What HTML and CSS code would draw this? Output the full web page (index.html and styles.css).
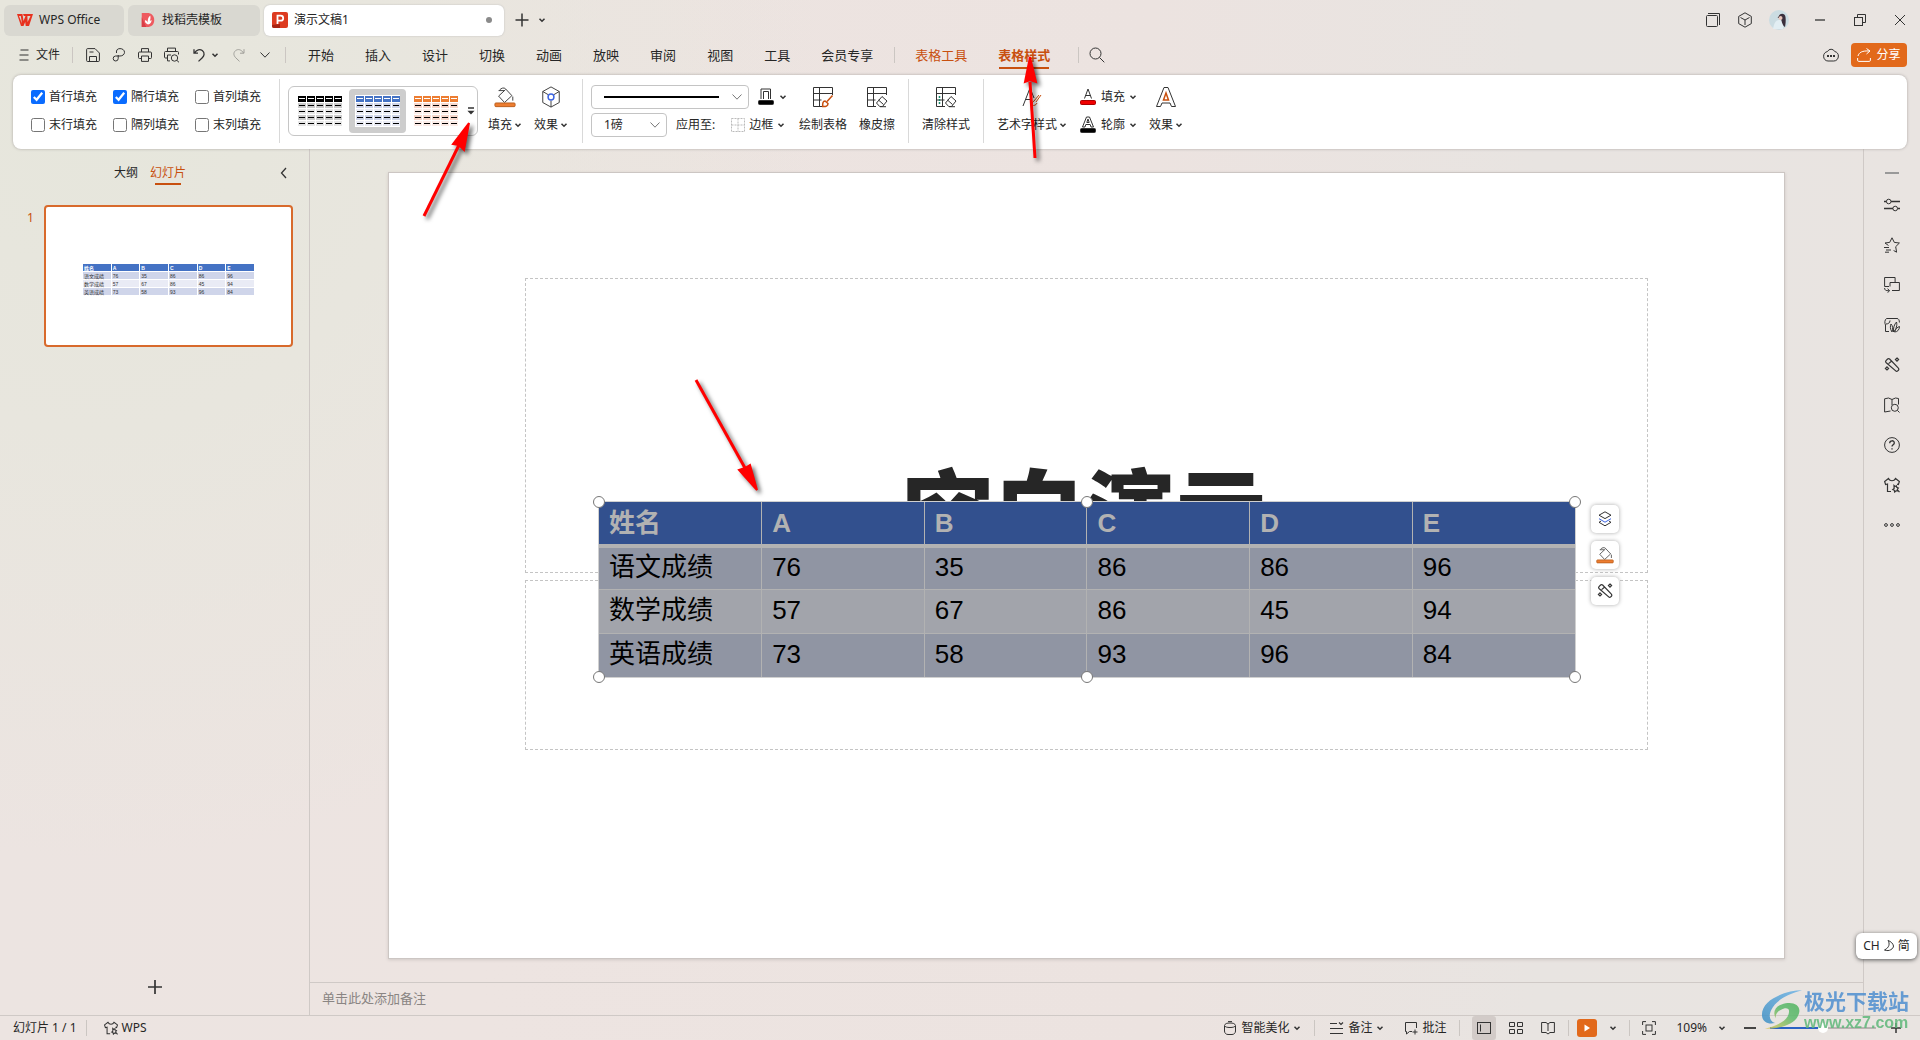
FILE: index.html
```html
<!DOCTYPE html>
<html lang="zh-CN">
<head>
<meta charset="utf-8">
<title>演示文稿1 - WPS Office</title>
<link rel="stylesheet" href="styles.css">
</head>
<body>
<svg class="defs" aria-hidden="true">
  <symbol id="chev" viewBox="0 0 8 8"><path d="M1.5 2.7 4 5.2 6.500 2.700" stroke-width="1.5"/></symbol>
  <symbol id="chev-thin" viewBox="0 0 12 12"><path d="M1.500 3.500 6 8.200 10.500 3.500"/></symbol>
  <symbol id="bucket" viewBox="0 0 24 24"><path d="M6 4.500c2-2.500 5-3 6.500-1.500l7 7.500-8 7.500-6.500-7 7.500-7M5 5h6M20.500 11.500v4.500" /><rect x="1" y="18.500" width="22" height="4" rx="1" fill="#ed7d31" stroke="#b75c1a"/></symbol>
  <symbol id="wand" viewBox="0 0 16 16"><path d="M2 3.600 3.600 2a1.400 1.400 0 0 1 2 0l8.800 9.200a1.400 1.400 0 0 1 0 2l-.7.700a1.400 1.400 0 0 1-2 0L2 5.500a1.400 1.400 0 0 1 0-1.900zM4.600 6.600l2.800-2.400M13 1l1.600 1.600L13 4.200l-1.600-1.600zM3 9.800l1.600 1.600L3 13l-1.600-1.600z" stroke-width="1.200"/></symbol>
  <symbol id="shirt" viewBox="0 0 16 16"><path d="M7 14.500H3.500V7L1.600 7.600.600 4.500 4.500 1.500c1.500 3 5.500 3 7 0l3.900 3-1 3-1.400-.4M10 8.500l1 1 1.500-.7.200 1.600 1.600.600-1 1.300.4 1.600-1.700-.1-1.300 1.200-.4-1.700-1.500-.7 1.300-1zM13.500 13l2 2.200" stroke-width="1.200"/></symbol>
  <symbol id="tablebase" viewBox="0 0 22 22"><path d="M10 20.500H1.500V1.500h19V9M1.500 7.500h19M7.500 1.500v19M1.500 14h8"/></symbol>
</svg>

<header class="titlebar">
  <button class="tab tab-home"><svg class="logo" viewBox="0 0 16 14"><path d="M0 1h5.500l1 7L8.500 3H6.800L6 1h10l-4 12H8.700l-.5-4-1.700 4H4zM2 3l3 7.500L3.800 3zM10.400 3l.2 6L13.500 3z" fill="#e8321f" fill-rule="evenodd"/></svg>WPS Office</button>
  <button class="tab tab-shell"><svg class="logo" viewBox="0 0 16 18"><path d="M1 1h6c5 0 8 3 8 8s-3 8-8 8H1z" fill="#ee5a5f"/><path d="M1 17V6l5 11z" fill="#d93d46"/><path d="M8 14c-3-1-4-3-3-5 2 1 2.500 2 2.800 3C7.500 9 8 6 10.500 4c.5 2 .5 4-.5 6l2-1c0 3-1.500 4.500-4 5z" fill="#fff"/></svg>找稻壳模板</button>
  <button class="tab tab-doc"><svg class="logo" viewBox="0 0 16 16"><rect width="16" height="16" rx="2" fill="#dd3b20"/><path d="M0 13l8-1v4H2a2 2 0 0 1-2-2z" fill="#a82412"/><path d="M5.500 12V3.700h3.200a2.500 2.500 0 0 1 0 5H5.500" fill="none" stroke="#fff" stroke-width="1.800"/></svg><span>演示文稿1</span><i class="dot"></i></button>
  <button class="ico newtab" aria-label="新建"><svg class="i14" viewBox="0 0 14 14"><path d="M7 .5v13M.5 7h13" stroke-width="1.500"/></svg></button>
  <button class="ico" aria-label="标签列表"><svg class="i8"><use href="#chev"/></svg></button>
  <div class="win">
    <button class="ico" aria-label="窗口"><svg class="i16" viewBox="0 0 16 16"><rect x="1.500" y="3.500" width="11" height="11" rx="1"/><path d="M3 1.500h11.500V13"/></svg></button>
    <button class="ico" aria-label="应用"><svg class="i16" viewBox="0 0 16 16"><path d="M8 .8l6.300 3.600v7.200L8 15.200l-6.300-3.600V4.400zM3.500 5.500 8 8l4.500-2.500M8 8v5"/></svg></button>
    <button class="ico" aria-label="账户"><svg class="i20" viewBox="0 0 20 20"><circle cx="10" cy="10" r="10" fill="#cbdce2" stroke="none"/><path d="M4 19c1-6 3-9 6-9s5 4 4 9z" fill="#e2eef3" stroke="none"/><path d="M10 6c1-3 6-3 6.500 1 .5 4 0 7-.5 10-2-1-3-4-3.500-6.500z" fill="#3a2f3c" stroke="none"/><circle cx="11.500" cy="8" r="2" fill="#e9c6bb" stroke="none"/><path d="M9 8l2-3" stroke="#5a4a50"/></svg></button>
    <button class="ico wide" aria-label="最小化"><svg class="i12" viewBox="0 0 12 12"><path d="M1 6h10" stroke-width="1.300"/></svg></button>
    <button class="ico wide" aria-label="还原"><svg class="i12" viewBox="0 0 12 12"><rect x=".5" y="3.500" width="8" height="8"/><path d="M3.500 3.500v-3h8v8h-3"/></svg></button>
    <button class="ico wide" aria-label="关闭"><svg class="i12" viewBox="0 0 12 12"><path d="M1 1l10 10M11 1 1 11"/></svg></button>
  </div>
</header>

<nav class="menubar">
  <button class="file"><svg class="i10" viewBox="0 0 10 12"><path d="M1.500 1h8M.500 6h9M.500 11h9" stroke-width="1.200"/></svg>文件</button>
  <i class="vr"></i>
  <div class="quick">
    <button class="ico" aria-label="保存"><svg class="i14" viewBox="0 0 14 14"><path d="M.600 1.500A1 1 0 0 1 1.600.600H9l4.400 4.400v7.500a1 1 0 0 1-1 1H1.600a1 1 0 0 1-1-1zM3.500 13.400V8.500h7v4.900M3.500 4h4"/></svg></button>
    <button class="ico" aria-label="输出"><svg class="i14" viewBox="0 0 14 14"><path d="M4.500 5C4 2 5.500.600 8 .600s4.500 1.500 4.500 3.700S10.500 8 8 8H3.500a2.500 2.500 0 1 0 2.700 2.500V7" /></svg></button>
    <button class="ico" aria-label="打印"><svg class="i14" viewBox="0 0 14 14"><path d="M3.500 4V.600h7V4M3.500 10.500h-2a1 1 0 0 1-1-1V5a1 1 0 0 1 1-1h11a1 1 0 0 1 1 1v4.500a1 1 0 0 1-1 1h-2M3.500 8h7v5.400h-7z"/></svg></button>
    <button class="ico" aria-label="打印预览"><svg class="i16" viewBox="0 0 16 15"><path d="M3.500 4V.600h8V4M3.500 10.500h-2a1 1 0 0 1-1-1V5a1 1 0 0 1 1-1h12a1 1 0 0 1 1 1v2M6 13.400H3.500V7.500H7M13 13l2 1.800"/><circle cx="10.500" cy="10.500" r="3.200"/></svg></button>
    <button class="ico" aria-label="撤销"><svg class="i14" viewBox="0 0 14 14"><path d="M2 1.200v4h4M2.500 5C4.500 1.500 8 .800 10.300 2.500c3 2.500 1.700 5.500 0 7.200L6.500 13.400" stroke-width="1.300"/></svg><svg class="i8"><use href="#chev"/></svg></button>
    <button class="ico off" aria-label="恢复" disabled><svg class="i14" viewBox="0 0 14 14"><path d="M12 1.200v4H8M11.500 5C9.500 1.500 6 .800 3.700 2.500c-3 2.500-1.700 5.500 0 7.200l3.800 3.700"/></svg></button>
    <button class="ico" aria-label="更多"><svg class="i12"><use href="#chev-thin"/></svg></button>
  </div>
  <i class="vr"></i>
  <div class="menus">
    <a href="#">开始</a><a href="#">插入</a><a href="#">设计</a><a href="#">切换</a><a href="#">动画</a><a href="#">放映</a><a href="#">审阅</a><a href="#">视图</a><a href="#">工具</a><a href="#">会员专享</a>
  </div>
  <i class="vr"></i>
  <div class="menus ctx"><a href="#">表格工具</a><a href="#" class="on">表格样式</a></div>
  <i class="vr"></i>
  <button class="ico search" aria-label="搜索"><svg class="i16" viewBox="0 0 16 16"><circle cx="6.500" cy="6.500" r="5.500"/><path d="M10.500 10.500 15.300 15.300"/></svg></button>
  <div class="share-area">
    <button class="ico" aria-label="云同步"><svg class="i16" viewBox="0 0 16 14"><path d="M4.500 3.500a4 4 0 0 1 7.200 0C14 4 15.400 5.800 15.400 8c0 3-2 5-4.600 5H5C2.500 13 .600 11 .600 8.200c0-2.400 1.500-4.200 3.900-4.700z"/><path d="M4 8h2M7 8h2M10 8h2" stroke-width="2"/></svg></button>
    <button class="share"><svg class="i14" viewBox="0 0 14 14"><path d="M1 8c1-3.500 4-5.500 11.500-5M9.500.500 13 3 9.500 6M.600 10v2.200a1.200 1.200 0 0 0 1.200 1.200h10.400a1.200 1.200 0 0 0 1.200-1.200V10"/></svg>分享</button>
  </div>
</nav>

<section class="ribbon">
  <div class="group checks">
    <label><input type="checkbox" checked>首行填充</label><label><input type="checkbox" checked>隔行填充</label><label><input type="checkbox">首列填充</label>
    <label><input type="checkbox">末行填充</label><label><input type="checkbox">隔列填充</label><label><input type="checkbox">末列填充</label>
  </div>
  <div class="group styles">
    <div class="gallery">
      <button class="swatch black" aria-label="黑色样式"><i></i><i></i><i></i><i></i><i></i></button>
      <button class="swatch blue on" aria-label="蓝色样式"><i></i><i></i><i></i><i></i><i></i></button>
      <button class="swatch orange" aria-label="橙色样式"><i></i><i></i><i></i><i></i><i></i></button>
      <button class="ico gmore" aria-label="更多样式"><svg class="i8" viewBox="0 0 8 8"><path d="M1 1h6M2 4.500l2 2 2-2z" stroke-width="1.300"/></svg></button>
    </div>
    <button class="big"><svg class="i24"><use href="#bucket"/></svg><span>填充<svg class="i8"><use href="#chev"/></svg></span></button>
    <button class="big"><svg class="i24" viewBox="0 0 24 24"><path d="M12 1l9 5v12l-9 5-9-5V6zM3 6l6 3.500M21 6l-6 3.500M12 23v-7"/><circle cx="12" cy="12" r="3.200" stroke="#3a62e0" stroke-width="1.600"/></svg><span>效果<svg class="i8"><use href="#chev"/></svg></span></button>
  </div>
  <div class="group borders">
    <div class="stack">
      <div class="line">
        <span class="combo long"><select aria-label="线型"><option></option></select><b class="stroke"></b><svg class="i12"><use href="#chev-thin"/></svg></span>
        <button class="small pen" aria-label="线条颜色"><svg class="i18" viewBox="0 0 18 18"><path d="M4 11V1h9.500v10M6.500 11V3.500h5V11"/><rect x="1.500" y="12.500" width="15" height="4" rx="1" fill="#000"/></svg><svg class="i8"><use href="#chev"/></svg></button>
      </div>
      <div class="line">
        <span class="combo short"><select aria-label="线宽"><option>1磅</option></select><svg class="i12"><use href="#chev-thin"/></svg></span>
        <span class="apply">应用至:</span>
        <button class="small"><svg class="i14 faint" viewBox="0 0 14 14"><path d="M.500.500h13v13H.500zM7 .500v13M.500 7h13" stroke-dasharray="2 1"/></svg>边框<svg class="i8"><use href="#chev"/></svg></button>
      </div>
    </div>
    <button class="big"><svg class="i22" viewBox="0 0 22 22"><use href="#tablebase"/><path d="M20.500 9.500l-5.500 6M13 15c-2 0-2.500 2-2.300 5.500 3 .3 5.300-.5 5.300-3z" stroke="#c8500f" stroke-width="1.500"/></svg><span>绘制表格</span></button>
    <button class="big"><svg class="i22" viewBox="0 0 22 22"><use href="#tablebase"/><path d="M16 10.500l5 4.500-4.500 5.500h-2.800L10.500 17zM12.500 14l5 4.500M14 20.700h6"/></svg><span>橡皮擦</span></button>
  </div>
  <div class="group clear">
    <button class="big"><svg class="i22" viewBox="0 0 22 22"><use href="#tablebase"/><path d="M16 10.500l5 4.500-4.500 5.500h-2.800L10.500 17zM12.500 14l5 4.500M14 20.700h6"/><path d="M4.500 10v9" stroke="#18896b" stroke-dasharray="2 1" stroke-width="1.500"/></svg><span>清除样式</span></button>
  </div>
  <div class="group art">
    <button class="big"><svg class="i22" viewBox="0 0 22 22"><path d="M2 20 9 2l4 10M5 13.500h6"/><path d="M20 9l-5 7M18 9l-5 6c-2 1-2 3-2 4.500 2 0 4 0 5-2.500" stroke="#c8500f"/></svg><span>艺术字样式<svg class="i8"><use href="#chev"/></svg></span></button>
    <div class="stack tight">
      <button class="small"><svg class="i18" viewBox="0 0 18 18"><path d="M5.500 10.500 9 1l3.500 9.500M6.500 7.500h5"/><rect x="1.500" y="12.500" width="15" height="4" rx="1" fill="#f00000" stroke="#a00"/></svg>填充<svg class="i8"><use href="#chev"/></svg></button>
      <button class="small"><svg class="i18" viewBox="0 0 18 18"><path d="M3.500 11 7.500 1h3l4 10h-2.500l-.8-2.500H6.800L6 11zM7.800 6.500 9 3l1.200 3.500z"/><rect x="1.500" y="12.500" width="15" height="4" rx="1" fill="#000"/></svg>轮廓<svg class="i8"><use href="#chev"/></svg></button>
    </div>
    <button class="big"><svg class="i22" viewBox="0 0 22 22"><path d="M1.500 20.500 9 1.500h4l7.500 19h-4L15 17H7l-1.500 3.500z"/><path d="M8.500 14 11 7l2.500 7z" stroke="#c8500f" stroke-width="1.500"/></svg><span>效果<svg class="i8"><use href="#chev"/></svg></span></button>
  </div>
</section>

<main class="work">
  <aside class="panel">
    <div class="ptabs"><a href="#">大纲</a><a href="#" class="on">幻灯片</a><button class="ico fold" aria-label="收起"><svg class="i12" viewBox="0 0 12 12"><path d="M8 1 3.500 6 8 11" stroke-width="1.300"/></svg></button></div>
    <div class="thumbrow"><span>1</span>
      <div class="thumb">
        <table class="mini">
          <tr><th>姓名</th><th>A</th><th>B</th><th>C</th><th>D</th><th>E</th></tr>
          <tr><td>语文成绩</td><td>76</td><td>35</td><td>86</td><td>86</td><td>96</td></tr>
          <tr><td>数学成绩</td><td>57</td><td>67</td><td>86</td><td>45</td><td>94</td></tr>
          <tr><td>英语成绩</td><td>73</td><td>58</td><td>93</td><td>96</td><td>84</td></tr>
        </table>
      </div>
    </div>
    <button class="ico add" aria-label="新建幻灯片"><svg class="i14" viewBox="0 0 14 14"><path d="M7 0v14M0 7h14" stroke-width="1.700"/></svg></button>
  </aside>
  <section class="center">
    <div class="stage">
      <div class="slide">
        <div class="ph ph-title"></div>
        <div class="ph ph-sub"></div>
        <h1>空白演示</h1>
        <div class="frame">
          <table class="grid">
            <tr><th>姓名</th><th>A</th><th>B</th><th>C</th><th>D</th><th>E</th></tr>
            <tr><td>语文成绩</td><td>76</td><td>35</td><td>86</td><td>86</td><td>96</td></tr>
            <tr><td>数学成绩</td><td>57</td><td>67</td><td>86</td><td>45</td><td>94</td></tr>
            <tr><td>英语成绩</td><td>73</td><td>58</td><td>93</td><td>96</td><td>84</td></tr>
          </table>
          <i class="h tl"></i><i class="h tc"></i><i class="h tr"></i><i class="h bl"></i><i class="h bc"></i><i class="h br"></i>
          <div class="floats">
            <button aria-label="图层"><svg class="i16" viewBox="0 0 16 16"><path d="M8 .800 14 4.200 8 7.600 2 4.200zM2 11.300l6 3.500 6-3.500-2-1.200M2 11.300l2-1.200"/><path d="M2 7.700 8 11.200l6-3.500" stroke="#3a62e0"/></svg></button>
            <button aria-label="填充"><svg class="i18"><use href="#bucket"/></svg></button>
            <button aria-label="美化"><svg class="i16"><use href="#wand"/></svg></button>
          </div>
        </div>
      </div>
    </div>
    <div class="notes">单击此处添加备注</div>
  </section>
  <aside class="rail">
    <i class="grip"></i>
    <button class="ico" aria-label="属性"><svg class="i16" viewBox="0 0 16 16"><path d="M0 4.500h2.500M7 4.500h9M0 11.500h9M13.500 11.500H16" stroke-width="1.300"/><circle cx="4.700" cy="4.500" r="2.300"/><circle cx="11.200" cy="11.500" r="2.300"/></svg></button>
    <button class="ico" aria-label="动画"><svg class="i16" viewBox="0 0 16 16"><path d="M4.500 8.500 1 6l4.700-.6L8 .800l2.300 4.600L15.400 6l-3.700 3.700.9 5.500-3-1.700M0 10.500h5M2 13h5M1 15.200h4"/></svg></button>
    <button class="ico" aria-label="切换"><svg class="i16" viewBox="0 0 16 16"><path d="M5 9.500H.600v-9h10.500V5.500M6 5.500h9.400v8H8M6 9.500v-4M.600 11c0 2 1 2.800 4.400 2.800M3.500 11.700l2.200 2-2.200 2"/></svg></button>
    <button class="ico" aria-label="对象"><svg class="i16" viewBox="0 0 16 16"><path d="M5 14.500H1.500V8C.500 6 .500 3 2.500 1.500h10.500c1.500 0 2.400 1.500 2.400 4M2 7c2 0 4-1 4-3.500M8 15c-2-3-2-6-1-8 2 2 2 5 1 8zM9.500 15c-.5-4 1-8 3-10 .8 3 0 7-3 10zM10.500 15c1-3 3-5 5-5.500 0 3-2 5.500-5 5.500z"/></svg></button>
    <button class="ico" aria-label="美化"><svg class="i16"><use href="#wand"/></svg></button>
    <button class="ico" aria-label="资料"><svg class="i16" viewBox="0 0 16 16"><path d="M6.500 14 .600 15V1.800L4.500 1 8 2.500 11.500 1l3 .5v6M8 2.500V8M13.500 13.500l2 2"/><circle cx="10.800" cy="10.800" r="3.500"/></svg></button>
    <button class="ico" aria-label="帮助"><svg class="i16" viewBox="0 0 16 16"><circle cx="8" cy="8" r="7.400"/><path d="M5.700 6.200C5.700 3 10.300 3 10.300 6c0 1.800-2.300 1.800-2.300 3.500M8 11.300v1.300" stroke-width="1.300"/></svg></button>
    <button class="ico" aria-label="皮肤"><svg class="i16"><use href="#shirt"/></svg></button>
    <button class="ico" aria-label="更多"><svg class="i16" viewBox="0 0 16 16"><circle cx="2" cy="8" r="1.400"/><circle cx="8" cy="8" r="1.400"/><circle cx="14" cy="8" r="1.400"/></svg></button>
  </aside>
</main>

<footer class="status">
  <span>幻灯片 1 / 1</span><i class="vr"></i>
  <button class="small skin"><svg class="i14"><use href="#shirt"/></svg>WPS</button>
  <div class="sright">
    <button class="small"><svg class="i14" viewBox="0 0 14 14"><path d="M1.500 4.500C2 6 4 6.500 7 6.500s5-.5 5.500-2C12 2.500 10 2 7 2S2 2.500 1.500 4.500zM1.500 5v5c0 2 1.500 3.500 3.500 3.500h4c2 0 3.500-1.500 3.500-3.500V5M5 .600h4"/></svg>智能美化<svg class="i8"><use href="#chev"/></svg></button>
    <i class="vr"></i>
    <button class="small lead"><svg class="i14" viewBox="0 0 14 14"><path d="M0 2.500h7M0 7.500h13M0 12.500h13M9 1.500l2 2 2-2" stroke-width="1.200"/></svg>备注<svg class="i8"><use href="#chev"/></svg></button>
    <button class="small lead"><svg class="i14" viewBox="0 0 14 14"><path d="M12.500 7V1.500H1.500v9h1v2.500l3-2.500H8M11 8.500v5M8.500 11h5"/></svg>批注</button>
    <i class="vr"></i>
    <button class="view on" aria-label="普通视图"><svg class="i14" viewBox="0 0 14 14"><rect x=".5" y="1.500" width="13" height="11"/><path d="M3.500 3.500v7"/></svg></button>
    <button class="view" aria-label="浏览视图"><svg class="i14" viewBox="0 0 14 14"><path d="M.500 1.500h5v4h-5zM8.500 1.500h5v4h-5zM.500 8.500h5v4h-5zM8.500 8.500h5v4h-5z"/></svg></button>
    <button class="view" aria-label="阅读视图"><svg class="i14" viewBox="0 0 14 14"><path d="M7 3 5 1.500H.600v10H5L7 13l2-1.500h4.400v-10H9zM7 3v7"/></svg></button>
    <i class="vr"></i>
    <button class="play" aria-label="放映"><svg class="i12" viewBox="0 0 12 12"><path d="M3.500 2.500v7L9 6z" fill="#fff" stroke="none"/></svg></button>
    <button class="ico playmore" aria-label="放映选项"><svg class="i8"><use href="#chev"/></svg></button>
    <i class="vr"></i>
    <button class="ico fit" aria-label="适应窗口"><svg class="i14" viewBox="0 0 14 14"><path d="M.600 4V.600H4M10 .600h3.400V4M13.400 10v3.400H10M4 13.400H.600V10"/><rect x="4" y="4" width="6" height="6"/></svg></button>
    <button class="small pct">109%<svg class="i8"><use href="#chev"/></svg></button>
    <button class="ico" aria-label="缩小"><svg class="i12" viewBox="0 0 12 12"><path d="M0 6h12" stroke-width="1.800"/></svg></button>
    <input class="zoom" type="range" min="0" max="100" value="50" aria-label="缩放">
    <button class="ico" aria-label="放大"><svg class="i12" viewBox="0 0 12 12"><path d="M1 6h10M6 1v10" stroke-width="1.500"/></svg></button>
  </div>
</footer>

<div class="ime">CH <svg class="i12" viewBox="0 0 12 12"><path d="M5 .500c2 3 1.500 7-3.500 9.500 5 2 9-1.500 9-4C10 3.500 8 1.500 5 .500z"/></svg> 简</div>

<div class="mark">
  <svg viewBox="0 0 46 42">
    <defs>
      <linearGradient id="mb" x1="0" y1="1" x2="1" y2="0"><stop offset="0" stop-color="#3d8fc4"/><stop offset="1" stop-color="#6fb4e6"/></linearGradient>
      <linearGradient id="mg" x1="0" y1="1" x2="1" y2="0"><stop offset="0" stop-color="#e3c95c"/><stop offset=".6" stop-color="#5cba6c"/><stop offset="1" stop-color="#4fb35e"/></linearGradient>
    </defs>
    <path d="M44 0C28 0 1 9 1 26c0 7 6 11 14 9-6-2-7-8-4-14C16 10 30 4 44 0z" fill="url(#mb)"/>
    <path d="M4 41c12-3 26-8 26-19 0-3-4-4-9-1-4 2-6 6-5 9-4-6-1-13 6-15 11-4 20 0 19 8C39 36 22 41 4 41z" fill="url(#mg)"/>
  </svg>
  <div><b>极光下载站</b><em>www.xz7.com</em></div>
</div>

<svg class="arrows" aria-hidden="true">
  <g><path d="M424 216 459 145"/><path class="head" d="M469 123 464 150 459 145 453 144z"/></g>
  <g><path d="M696 380 745 468"/><path class="head" d="M757 490 739 470 745 468 750 465z"/></g>
  <g><path d="M1035 158 1030 82"/><path class="head" d="M1030 57 1036 82 1030 80 1025 82z"/></g>
</svg>
</body>
</html>
```
FILE: styles.css
```css
* { box-sizing: border-box; }

body {
  margin: 0;
  height: 100vh;
  display: flex;
  flex-direction: column;
  overflow: hidden;
  font: 12px/16px "Noto Sans", "Noto Sans CJK SC", sans-serif;
  color: #262626;
  background:
    radial-gradient(circle at 5% 12%, #e6e6dc 0, #e8e6de 15%, rgba(233, 230, 223, 0) 36%),
    linear-gradient(90deg, #ece4e1 0, #ede4e1 25%, #ece3e0 60%, #e8e4e1 80%, #e9e4e1 100%);
}

.defs { position: absolute; width: 0; height: 0; }
svg { display: block; flex: none; fill: none; stroke: #333; stroke-width: 1; }
button { display: flex; align-items: center; justify-content: center; padding: 0; border: 0; background: none; font: inherit; color: inherit; white-space: nowrap; }
a { color: inherit; text-decoration: none; }
.i8 { width: 8px; height: 8px; }
.i10 { width: 10px; height: 12px; }
.i12 { width: 12px; height: 12px; }
.i14 { width: 14px; height: 14px; }
.i16 { width: 16px; height: 16px; }
.i18 { width: 18px; height: 18px; }
.i20 { width: 20px; height: 20px; }
.i22 { width: 22px; height: 22px; }
.i24 { width: 24px; height: 24px; }
.vr { width: 1px; height: 16px; background: #cbc6c2; flex: none; }

/* title bar */
.titlebar { display: flex; align-items: center; height: 40px; padding-left: 4px; }
.tab { height: 31px; border-radius: 6px; background: #d9d8d1; justify-content: flex-start; gap: 6px; margin-right: 4px; }
.tab .logo { width: 16px; height: 16px; stroke: none; }
.tab-home { width: 120px; padding-left: 13px; }
.tab-shell { width: 132px; padding-left: 12px; }
.tab-doc { width: 240px; padding: 0 12px 0 8px; background: #fff; box-shadow: 0 0 2px #bbb; }
.tab-doc span { flex: 1; text-align: left; }
.dot { width: 6px; height: 6px; border-radius: 50%; background: #8a8a8a; }
.newtab { margin: 0 9px 0 7px; }
.win { margin-left: auto; display: flex; align-items: center; gap: 16px; padding-right: 8px; }
.win .wide { width: 24px; }
.win .wide:nth-child(4) { margin-left: 3px; }

/* menu row */
.menubar { display: flex; align-items: center; height: 34px; padding: 0 13px 4px 19px; }
.file { gap: 7px; margin-right: 12px; }
.quick { display: flex; align-items: center; gap: 12px; margin: 0 14px 0 13px; }
.quick button { gap: 5px; }
.quick button:nth-child(6) { margin: 0 1px; }
.off { opacity: .4; }
.menus { display: flex; gap: 31px; margin: 0 21px 0 22px; font-size: 13px; line-height: 18px; }
.ctx { color: #c8500f; margin: 0 28px 0 20px; }
.ctx .on { font-weight: 700; box-shadow: 0 4px 0 -1px #ebe4e1, 0 6px 0 -1px #c8500f; }
.search { margin-left: 10px; }
.share-area { margin-left: auto; display: flex; gap: 12px; }
.share { width: 56px; height: 24px; border-radius: 4px; background: #e2691b; color: #fff; gap: 5px; }
.share svg { stroke: #fff; }

/* ribbon */
.ribbon { display: flex; margin: 1px 13px 0; height: 74px; padding: 4px 0 6px; border-radius: 8px; background: #fff; box-shadow: 0 0 3px #aaa5a2; flex: none; z-index: 1; }
.group { display: flex; align-items: center; height: 64px; border-right: 1px solid #d9d9d9; }
.group:last-child { border: 0; }
.checks { display: grid; grid-template-columns: repeat(3, 82px); row-gap: 12px; align-content: center; padding: 0 2px 0 18px; }
.checks label { display: flex; align-items: center; gap: 4px; white-space: nowrap; }
.checks input { width: 14px; height: 14px; margin: 0; accent-color: #0a6cff; }
.styles { padding: 0 12px 0 8px; }
.gallery { display: flex; align-items: center; gap: 1px; width: 190px; height: 50px; padding-left: 2px; border: 1px solid #c6c6c6; border-radius: 6px; margin-right: 10px; }
.swatch { flex: none; flex-direction: column; gap: 1px; width: 57px; height: 44px; border-radius: 4px; }
.swatch.on { background: linear-gradient(#fff, #fff) center / 45px 32px no-repeat, #cdcdcd; }
.swatch i { position: relative; width: 44px; height: 5px; background: var(--c); -webkit-mask: repeating-linear-gradient(90deg, #000 0 8px, transparent 8px 9px); }
.swatch i:nth-child(even) { background: var(--b); }
.swatch i:first-child { height: 6px; background: var(--a); }
.swatch i::after { content: ""; position: absolute; left: 0; right: 0; top: 2px; height: 1px; background: repeating-linear-gradient(90deg, transparent 0 1px, #000 1px 7px, transparent 7px 9px); }
.swatch i:first-child::after { background: repeating-linear-gradient(90deg, transparent 0 1px, #fff 1px 7px, transparent 7px 9px); }
.black { --a: #000; --b: #cbcbcb; --c: #e7e7e7; }
.blue { --a: #4472c4; --b: #cfd5ea; --c: #e9ebf5; }
.orange { --a: #ed7d31; --b: #f8d7cb; --c: #fcece7; }
.gmore { width: 11px; }
.big { flex-direction: column; gap: 9px; height: 56px; padding-bottom: 4px; }
.big > svg { height: 22px; }
.big span { display: flex; align-items: center; gap: 2px; }
.styles .big { width: 34px; margin-right: 12px; }
.styles .big:last-child { margin-right: 2px; }
.borders { padding: 0 13px 0 8px; gap: 12px; }
.stack { display: flex; flex-direction: column; gap: 4px; }
.line { display: flex; align-items: center; }
.combo { position: relative; display: flex; align-items: center; height: 24px; border: 1px solid #c4c4c4; border-radius: 4px; }
.combo select { appearance: none; width: 100%; height: 22px; padding: 0 0 0 12px; border: 0; background: none; font: inherit; color: inherit; }
.combo svg { position: absolute; right: 5px; stroke: #777; }
.combo .stroke { position: absolute; left: 12px; width: 115px; height: 2px; background: #000; }
.long { width: 158px; }
.short { width: 76px; }
.pen { margin-left: 8px; }
.apply { margin: 0 16px 0 9px; }
.small { gap: 4px; }
.faint { stroke: #bbb; }
.clear { padding: 0 13px; }
.art { padding-left: 13px; gap: 12px; }
.tight { gap: 10px; }

/* workspace */
.work { flex: 1; min-height: 0; display: flex; }
.panel { width: 310px; border-right: 1px solid #cfc9c6; display: flex; flex-direction: column; }
.ptabs { display: flex; gap: 12px; align-items: center; padding: 16px 19px 0 114px; }
.ptabs .on { position: relative; color: #c8500f; }
.ptabs .on::after { content: ""; position: absolute; left: 5px; right: 5px; bottom: -4px; height: 2px; background: #c8500f; }
.fold { margin-left: auto; }
.thumbrow { display: flex; gap: 11px; margin: 24px 16px 0 27px; color: #c8500f; }
.thumbrow span { width: 6px; padding-top: 5px; }
.thumb { flex: 1; height: 142px; border: 2px solid #d86a2c; border-radius: 4px; background: #fff; padding: 56px 36px 0; }
.mini { width: 100%; table-layout: fixed; border-collapse: collapse; font: 5px/6px "Liberation Sans", "Noto Sans CJK SC", sans-serif; color: #333; }
.mini th, .mini td { padding: 0 1px; height: 8px; border: 1px solid #fff; background: #cfd5ea; text-align: left; white-space: nowrap; }
.mini th { background: #4472c4; color: #fff; }
.mini tr:nth-child(3) td { background: #e9ebf5; }
.add { margin: auto auto 21px; }

.center { flex: 1; min-width: 0; display: flex; flex-direction: column; }
.stage { flex: 1; min-height: 0; padding: 23px 78px; display: flex; }
.slide { position: relative; flex: 1; background: #fff; border: 1px solid #ccc6c3; box-shadow: 0 1px 3px #cfc8c5; }
.ph { position: absolute; left: 136px; right: 136px; border: 1px dashed #c4c4c4; }
.ph-title { top: 105px; height: 295px; }
.ph-sub { top: 407px; height: 170px; }
.slide h1 { position: absolute; left: 0; right: 4px; top: 273px; margin: 0; text-align: center; font-size: 91px; line-height: 120px; font-weight: 900; font-family: "Noto Sans CJK SC", sans-serif; color: #262626; }
.frame { position: absolute; left: 209px; right: 208px; top: 328px; border: 1px solid #d0d0d0; }
.grid { width: 100%; table-layout: fixed; border-collapse: collapse; font: 26px/36px "Liberation Sans", "Noto Sans CJK SC", sans-serif; color: #000; }
.grid th, .grid td { height: 44px; padding: 0 10px 3px; text-align: left; border: 1px solid #b2b2b2; background: #9095a3; }
.grid th { padding-bottom: 1px; background: #32508e; color: #b2b2b2; border-bottom: 4px solid #b2b2b2; }
.grid tr:nth-child(2) td { height: 43px; }
.grid tr:nth-child(3) td { background: #a2a4ab; }
.grid tr > :first-child { border-left: 0; }
.grid tr > :last-child { border-right: 0; }
.grid tr:first-child th { border-top: 0; }
.grid tr:last-child td { border-bottom: 0; }
.h { position: absolute; width: 12px; height: 12px; margin: -6px; border: 1px solid #777; border-radius: 50%; background: #fff; }
.tl, .bl { left: 0; }
.tc, .bc { left: 50%; }
.tr, .br { left: 100%; }
.tl, .tc, .tr { top: 0; }
.bl, .bc, .br { top: 100%; }
.floats { position: absolute; left: 100%; top: 3px; margin-left: 16px; display: flex; flex-direction: column; gap: 8px; }
.floats button { width: 28px; height: 28px; border-radius: 5px; background: #fff; box-shadow: 0 0 4px #aaa; }
.notes { height: 33px; border-top: 1px solid #cfc9c6; padding: 7px 12px; color: #8a8583; font-size: 13px; }

.rail { width: 57px; border-left: 1px solid #cfc9c6; display: flex; flex-direction: column; align-items: center; padding-top: 23px; }
.rail .grip { width: 14px; height: 2px; background: #999; margin-bottom: 11px; }
.rail .ico { height: 40px; width: 40px; }

/* status bar */
.status { height: 25px; flex: none; border-top: 1px solid #cfc9c6; display: flex; align-items: center; gap: 9px; padding: 0 18px 0 13px; }
.skin { margin-left: 8px; }
.sright { margin-left: auto; display: flex; align-items: center; gap: 8px; height: 100%; }
.sright .small { margin-right: 5px; }
.sright .lead { margin-left: 7px; }
.view { width: 24px; height: 24px; border-radius: 3px; }
.view.on { margin-left: 4px; background: #d2cbc8; }
.play { width: 20px; height: 18px; border-radius: 3px; background: #e2691b; }
.playmore { margin: 0 4px; }
.fit { margin: 0 12px 0 4px; }
.sright .pct { gap: 11px; margin-right: 10px; }
.zoom { appearance: none; width: 106px; height: 12px; margin: 0 6px; background: linear-gradient(90deg, #2b62c4 50%, #b9b3b1 50%) 0 5px / 100% 2px no-repeat; }
.zoom::-webkit-slider-thumb { appearance: none; width: 10px; height: 10px; border-radius: 50%; background: #fff; }

.ime { position: absolute; right: 3px; bottom: 81px; width: 61px; height: 26px; display: flex; align-items: center; justify-content: center; gap: 3px; border-radius: 6px; background: #fff; box-shadow: 0 1px 4px #555; }
.mark { position: absolute; right: 11px; bottom: 9px; display: flex; opacity: .85; }
.mark svg { width: 43px; height: 42px; stroke: none; }
.mark div { display: flex; flex-direction: column; }
.mark b { font-size: 21px; line-height: 25px; color: #4f8fd0; }
.mark em { font: 700 16px/17px "Liberation Sans", sans-serif; color: #5fb87a; }
.arrows { position: absolute; left: 0; top: 0; width: 100%; height: 100%; z-index: 2; pointer-events: none; stroke: #f00; stroke-width: 3; filter: drop-shadow(3px 3px 2px rgba(0, 0, 0, .6)); }
.arrows .head { fill: #f00; stroke-width: 2; }
```
